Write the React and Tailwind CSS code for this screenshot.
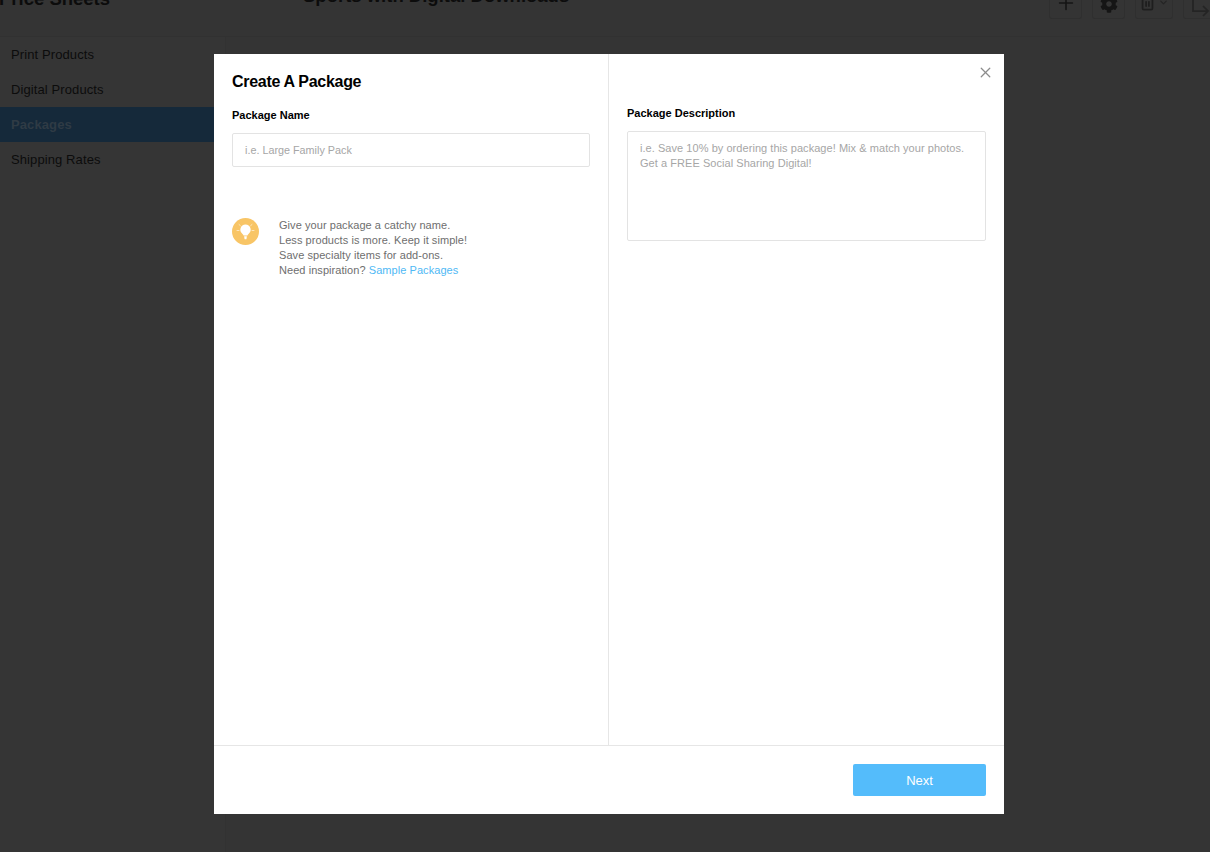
import { Plus, Trash2, ChevronDown, X } from 'lucide-react';
import { FaCog } from 'react-icons/fa';

const navItems = ['Print Products', 'Digital Products', 'Packages', 'Shipping Rates'];

function ToolButton({ children, className }) {
  return (
    <div className={`h-[19px] border border-[#2f2f2f] border-t-0 rounded-b-[3px] flex items-end justify-center overflow-hidden ${className}`}>
      {children}
    </div>
  );
}

function Background() {
  return (
    <div className="h-[852px] overflow-hidden bg-[#343434] flex flex-col">
      <div className="h-[37px] border-b border-[#313131] flex items-start shrink-0">
        <div className="w-[304px] shrink-0 text-[18.5px] font-bold leading-[24px] -mt-[13px] -ml-[1px] text-[#0c0c0c]">Price Sheets</div>
        <div className="flex-1 text-[18.5px] font-bold leading-[24px] -mt-[16px] text-[#0c0c0c]">Sports with Digital Downloads</div>
        <div className="flex gap-[10px] -mr-[6px]">
          <ToolButton className="w-[33px] pb-[4px]"><Plus size={22} strokeWidth={1.75} className="text-[#151515]" /></ToolButton>
          <ToolButton className="w-[33px] pb-[5px]"><FaCog size={18} className="text-[#151515]" /></ToolButton>
          <ToolButton className="w-[38px] pb-[7px] gap-[2px]">
            <Trash2 size={17} strokeWidth={2.5} className="text-[#1e1e1e]" />
            <ChevronDown size={11} strokeWidth={2.5} className="text-[#242424] mb-[3px]" />
          </ToolButton>
          <ToolButton className="w-[33px] pb-[1px]">
            <svg width="20" height="18" viewBox="0 0 20 18" fill="none" stroke="#242424" strokeWidth="1.75">
              <path d="M3 0v12h15M13 7l5 5-5 5" />
            </svg>
          </ToolButton>
        </div>
      </div>
      <div className="flex-1 flex">
        <div className="w-[226px] bg-[#353535] border-r border-[#323232] flex flex-col">
          {navItems.map((item) => (
            <div
              key={item}
              className={`h-[35px] pl-[11px] flex items-center text-[13px] tracking-[0.1px] ${item === 'Packages' ? 'bg-[#15293a] font-bold text-[#2f3b45]' : 'text-[#0c0c0c]'}`}
            >
              {item}
            </div>
          ))}
        </div>
      </div>
    </div>
  );
}

function BulbIcon() {
  return (
    <svg width="27" height="27" viewBox="0 0 27 27" className="shrink-0">
      <circle cx="13.5" cy="13.5" r="13.5" fill="#f8c566" />
      <path d="M13.5 6.5a5.2 5.2 0 0 0-3 9.4c.6.5.9 1 1 1.7h4c.1-.7.4-1.2 1-1.7a5.2 5.2 0 0 0-3-9.4z" fill="#fff" />
      <path d="M12.1 18.3h2.8l-.5 3h-1.8z" fill="#fff" />
      <path d="M5 12.5h2M20 12.5h2M7 6.5l1.4 1.2M20 6.5l-1.4 1.2" stroke="#fde7bd" strokeWidth="1" strokeLinecap="round" />
    </svg>
  );
}

export default function App() {
  return (
    <div className="relative h-[852px] overflow-hidden font-['Liberation_Sans',Arial,sans-serif]">
      <Background />
      <div className="absolute inset-0 pl-[214px] pt-[54px]">
        <div className="relative w-[790px] h-[760px] bg-white flex flex-col">
          <button className="absolute top-[10px] right-[10px] text-[#8c8c8c]">
            <X size={17} strokeWidth={1.75} />
          </button>
          <div className="flex-1 flex min-h-0">
            <div className="w-[395px] border-r border-[#e6e6e6] pt-[17px] pl-[18px] pr-[18px]">
              <h1 className="text-[16px] leading-[21px] font-bold text-black tracking-[-0.3px]">Create A Package</h1>
              <label className="block mt-[16px] text-[11px] leading-[15px] font-bold text-black">Package Name</label>
              <input
                placeholder="i.e. Large Family Pack"
                className="block mt-[10px] w-[358px] h-[34px] px-[12px] border border-[#e3e3e3] rounded-[2px] text-[10.8px] outline-none placeholder:text-[#a6a6a6]"
              />
              <div className="flex gap-[20px] mt-[51px]">
                <BulbIcon />
                <p className="text-[11px] leading-[15px] tracking-[0.06px] text-[#6e6e6e]">
                  Give your package a catchy name.<br />
                  Less products is more. Keep it simple!<br />
                  Save specialty items for add-ons.<br />
                  Need inspiration? <a className="text-[#4fb9f5]">Sample Packages</a>
                </p>
              </div>
            </div>
            <div className="flex-1 pt-[52px] pl-[18px] pr-[18px]">
              <label className="block text-[11px] leading-[15px] font-bold text-black">Package Description</label>
              <textarea
                placeholder={'i.e. Save 10% by ordering this package! Mix & match your photos.\nGet a FREE Social Sharing Digital!'}
                className="block mt-[10px] w-[359px] h-[110px] px-[12px] py-[9px] border border-[#e3e3e3] rounded-[2px] text-[11px] leading-[15px] tracking-[0.05px] outline-none resize-none placeholder:text-[#a6a6a6]"
              />
            </div>
          </div>
          <div className="h-[69px] shrink-0 border-t border-[#e6e6e6] flex items-start justify-end pt-[18px] pr-[18px]">
            <button className="w-[133px] h-[32px] pt-[1px] rounded-[2px] bg-[#54bcfb] text-white text-[13px]">Next</button>
          </div>
        </div>
      </div>
    </div>
  );
}
